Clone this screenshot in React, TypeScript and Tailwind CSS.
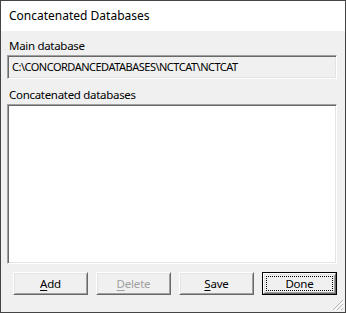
const sunken =
  'border border-t-[#a0a0a0] border-l-[#a0a0a0] border-r-white border-b-white shadow-[inset_1px_1px_0_#696969,inset_-1px_-1px_0_#e3e3e3]';

const raised =
  'border border-t-white border-l-white border-r-[#696969] border-b-[#696969] shadow-[inset_1px_1px_0_#e3e3e3,inset_-1px_-1px_0_#a0a0a0] bg-[#f0f0f0]';

function Button({ label, mnemonic, disabled }: { label: string; mnemonic?: boolean; disabled?: boolean }) {
  const first = label.slice(0, 1);
  const rest = label.slice(1);
  return (
    <button
      className={`w-[75px] h-[23px] flex items-center justify-center text-[11.5px] tracking-[-0.2px] leading-none ${raised} ${
        disabled ? 'text-[#a0a0a0]' : 'text-black'
      }`}
    >
      {mnemonic ? <span className="underline underline-offset-[2px]">{first}</span> : first}
      {rest}
    </button>
  );
}

function DefaultButton({ label }: { label: string }) {
  return (
    <div className="w-[75px] h-[23px] border border-black">
      <div className={`w-full h-full flex items-center justify-center p-[2px] ${raised}`}>
        <div className="w-full h-full border border-dotted border-black flex items-center justify-center text-[11.5px] tracking-[-0.2px] leading-none">
          {label}
        </div>
      </div>
    </div>
  );
}

function Gripper() {
  return (
    <svg className="absolute right-[1px] bottom-[1px]" width="12" height="12" viewBox="0 0 12 12">
      <g stroke="#b4b4b4" strokeWidth="1">
        <line x1="11" y1="1" x2="1" y2="11" />
        <line x1="11" y1="5" x2="5" y2="11" />
        <line x1="11" y1="9" x2="9" y2="11" />
      </g>
      <g stroke="#ffffff" strokeWidth="1">
        <line x1="12" y1="2" x2="2" y2="12" />
        <line x1="12" y1="6" x2="6" y2="12" />
      </g>
    </svg>
  );
}

export default function App() {
  return (
    <div className="relative w-[346px] h-[313px] border border-[#444444] flex flex-col font-['Noto_Sans',sans-serif] text-black select-none">
      {/* Title bar */}
      <div className="h-[30px] bg-white flex items-center pl-[8px] text-[12px]">Concatenated Databases</div>

      {/* Body */}
      <div className="flex-1 bg-[#f0f0f0] pl-[6px] pr-[8px] pt-[7px] flex flex-col">
        <div className="text-[11.5px] tracking-[-0.3px] leading-[16px] h-[16px] mb-[1px] pl-[2px]">Main database</div>
        <div className={`h-[24px] flex items-center pl-[4px] text-[11px] tracking-[-0.5px] bg-[#f0f0f0] ${sunken}`}>
          C:\CONCORDANCEDATABASES\NCTCAT\NCTCAT
        </div>

        <div className="text-[11.5px] tracking-[-0.3px] leading-[16px] h-[16px] mt-[8px] mb-[1px] pl-[2px]">
          Concatenated databases
        </div>
        <div className={`h-[160px] bg-white ${sunken}`} />

        <div className="flex gap-[8px] pl-[6px] mt-[8px]">
          <Button label="Add" mnemonic />
          <Button label="Delete" mnemonic disabled />
          <Button label="Save" mnemonic />
          <DefaultButton label="Done" />
        </div>
      </div>

      <Gripper />
    </div>
  );
}
